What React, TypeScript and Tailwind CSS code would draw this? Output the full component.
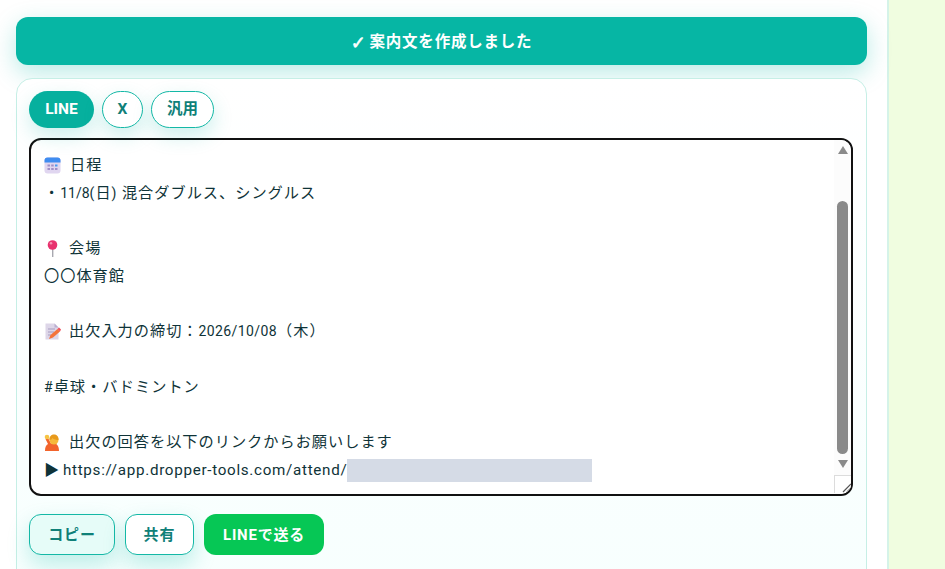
function CalendarIcon() {
  return (
    <svg width="17" height="17" viewBox="0 0 17 17" className="shrink-0">
      <rect x="0.5" y="0.5" width="16" height="16" rx="3" fill="#e0d6f0" />
      <path d="M0.5 5.500V3.500a3 3 0 0 1 3-3h10a3 3 0 0 1 3 3V5.500z" fill="#3f8cf0" />
      <g fill="#a08fc8">
        <rect x="3.500" y="7.500" width="2.500" height="2" />
        <rect x="7.200" y="7.500" width="2.500" height="2" />
        <rect x="11" y="7.500" width="2.500" height="2" fill="#4a9af0" />
        <rect x="3.500" y="11" width="2.500" height="2" />
        <rect x="7.200" y="11" width="2.500" height="2" />
        <rect x="11" y="11" width="2.500" height="2" />
      </g>
    </svg>
  );
}

function PinIcon() {
  return (
    <svg width="17" height="17" viewBox="0 0 17 17" className="shrink-0">
      <rect x="8" y="9" width="1.400" height="8" fill="#a8a8b0" />
      <circle cx="8.500" cy="5" r="4.800" fill="#e8326e" />
      <circle cx="7" cy="3.300" r="1.300" fill="#f48fb1" />
    </svg>
  );
}

function MemoIcon() {
  return (
    <svg width="17" height="17" viewBox="0 0 17 17" className="shrink-0">
      <path d="M1.500 0.500h9l4 4v12h-13z" fill="#ddd6e8" />
      <path d="M10.500 0.500l4 4h-4z" fill="#b9aed0" />
      <path d="M4 6h7M4 9h6M4 12h3" stroke="#a79cc0" strokeWidth="1" />
      <path d="M5 16l1.500-4 7-6 2.500 2.500-7 6z" fill="#f4743b" />
      <path d="M13.500 6l1.500-1.500 2 2-1 2z" fill="#ef4d5a" />
    </svg>
  );
}

function RaisingHandIcon() {
  return (
    <svg width="17" height="17" viewBox="0 0 17 17" className="shrink-0">
      <path d="M1 17c0-4 1-6 3-7L1.500 5l2.500-1 3 5.500h3c3 0 5 2.500 5 7.500z" fill="#f2642c" />
      <circle cx="10" cy="6" r="4.500" fill="#f6b93b" />
      <circle cx="3" cy="3" r="2.300" fill="#f6c445" />
      <path d="M5.500 6c-.5-3.500 2-5.500 4.500-5.500s5 2 4.500 5.500c-2 0-5-.5-6-2-.5 1-1.500 2-3 2z" fill="#e89a1c" />
    </svg>
  );
}

function Line({ children }: { children?: React.ReactNode }) {
  return <div className="flex h-[27.75px] items-center whitespace-pre">{children || ' '}</div>;
}

const softBtn = 'rounded-xl border border-[#14b8a6] pt-[2px] text-[15px] font-bold tracking-[0.06em] text-[#0f8078] shadow-[0_10px_22px_rgba(6,182,164,0.24)]';
const pillBtn = 'h-[37px] rounded-full border border-[#14b8a6] bg-white pt-[1px] text-[15.500px] font-bold text-[#0f8078] shadow-[0_8px_20px_rgba(6,182,164,0.2)]';

export default function App() {
  return (
    <div className="flex h-[569px] w-[945px] overflow-hidden bg-[#f0fde0] font-[Roboto,'Noto_Sans_CJK_JP',sans-serif]">
      <div className="h-full w-[889px] shrink-0 border-r-2 border-[#d5f3e8] bg-white pl-4 pr-5 pt-[17px]">
        <div className="flex h-12 items-center justify-center gap-[3px] rounded-xl bg-[#06b6a4] pt-[3px] text-[15.500px] font-bold tracking-[0.05em] text-white shadow-[0_8px_24px_rgba(6,182,164,0.28)]">
          <span className="font-['DejaVu_Sans'] text-[18px] leading-none [-webkit-text-stroke:0.6px_white]">✓</span>案内文を作成しました
        </div>
        <div className="mt-[13px] h-[520px] rounded-2xl border border-[#c6efe6] bg-gradient-to-b from-white to-[#f7fffe] px-3 pt-3">
          <div className="flex gap-2">
            <button className="h-[37px] w-[65px] rounded-full bg-[#06b09e] pt-[1px] text-[15.500px] font-bold text-white shadow-[0_8px_20px_rgba(6,182,164,0.2)]">LINE</button>
            <button className={`${pillBtn} w-[41px]`}>X</button>
            <button className={`${pillBtn} w-[63px]`}>汎用</button>
          </div>
          <div className="mt-[10px] flex h-[358px] w-[824px] overflow-hidden rounded-xl border-2 border-[#111] bg-white">
            <div className="min-w-0 flex-1 pl-[13px] pt-[11.500px] text-[15.200px] tracking-[1px] text-[#0f3338]">
              <Line><span className="flex items-center gap-[9px]"><CalendarIcon />日程</span></Line>
              <Line>・<span className="text-[14px] tracking-[0px]">11/8</span><span className="text-[14px]">(</span>日<span className="text-[14px]">) </span>混合ダブルス、シングルス</Line>
              <Line />
              <Line><span className="flex items-center gap-[8px]"><PinIcon />会場</span></Line>
              <Line>〇〇体育館</Line>
              <Line />
              <Line><span className="flex items-center gap-[8px]"><MemoIcon /><span>出欠入力の締切：<span className="text-[14px] tracking-[0.400px]">2026/10/08</span>（木）</span></span></Line>
              <Line />
              <Line><span className="text-[14px]">#</span>卓球・バドミントン</Line>
              <Line />
              <Line><span className="flex items-center gap-[8px]"><RaisingHandIcon />出欠の回答を以下のリンクからお願いします</span></Line>
              <Line>
                <span className="flex items-center">
                  <span className="tracking-[0px]">▶ </span>
                  <span className="tracking-[0.700px]">https://app.dropper-tools.com/attend/</span>
                  <span className="h-[23px] w-[245px] bg-[#d5dbe6]" />
                </span>
              </Line>
            </div>
            <div className="flex w-[17px] shrink-0 flex-col items-center bg-[#fcfcfc]">
              <svg width="10" height="8" viewBox="0 0 10 8" className="mt-[6px] shrink-0"><path d="M5 0l5 8H0z" fill="#8a8a8a" /></svg>
              <div className="mt-[47px] h-[253px] w-[11px] rounded-full bg-[#8a8a8a]" />
              <svg width="10" height="8" viewBox="0 0 10 8" className="mt-[6px] shrink-0"><path d="M5 8L0 0h10z" fill="#8a8a8a" /></svg>
              <div className="mt-[7px] h-[18px] w-[17px] border-l border-t border-[#dcdcdc] bg-white">
                <svg width="16" height="17" viewBox="0 0 16 17"><path d="M8 16L16 8M12 16l4-4" stroke="#555" strokeWidth="1.200" /></svg>
              </div>
            </div>
          </div>
          <div className="mt-[18px] flex gap-[10px]">
            <button className={`${softBtn} h-[41px] w-[86px] bg-[#e6fcf8]`}>コピー</button>
            <button className={`${softBtn} h-[41px] w-[69px] bg-white`}>共有</button>
            <button className="h-[41px] w-[120px] rounded-xl bg-[#06c755] pt-[2px] text-[15px] font-bold tracking-[0.05em] text-white">LINEで送る</button>
          </div>
        </div>
      </div>
    </div>
  );
}
